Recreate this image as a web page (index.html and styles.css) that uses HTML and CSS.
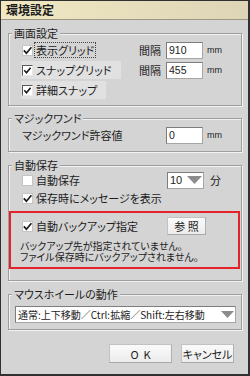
FILE: index.html
```html
<!DOCTYPE html>
<html lang="ja">
<head>
    <meta charset="UTF-8">
    <meta name="viewport" content="width=device-width, initial-scale=1.0">
    <title>環境設定</title>
    <link rel="stylesheet" href="styles.css">
</head>
<body class="cfg-body">
    <div class="cfg-win">
        <div class="cfg-title">環境設定</div>
        <div class="cfg-main">

            <!-- 画面設定 -->
            <fieldset class="cfg-grp cfg-grp-screen">
                <legend class="cfg-legend">画面設定</legend>
                <div class="cfg-row">
                    <span class="cfg-cbarea">
                        <span class="cfg-cb">
                            <span class="cfg-chk"><svg viewBox="0 0 11 11" width="11" height="11"><path d="M1.8 5.4 L4.4 8.2 L9.4 2.3" fill="none" stroke="#1a1a1a" stroke-width="1.7"/></svg></span>
                            <span class="cfg-lbl cfg-focus">表示グリッド</span>
                        </span>
                    </span>
                    <span class="cfg-key">間隔</span>
                    <span class="cfg-field">910</span>
                    <span class="cfg-unit">mm</span>
                </div>
                <div class="cfg-row">
                    <span class="cfg-cbarea">
                        <span class="cfg-cb cfg-lit">
                            <span class="cfg-chk cfg-chk-sunk"><svg viewBox="0 0 11 11" width="11" height="11"><path d="M2.3 5.3 L4.5 7.7 L8.6 2.8" fill="none" stroke="#1a1a1a" stroke-width="1.6"/></svg></span>
                            <span class="cfg-lbl">スナップグリッド</span>
                        </span>
                    </span>
                    <span class="cfg-key">間隔</span>
                    <span class="cfg-field">455</span>
                    <span class="cfg-unit">mm</span>
                </div>
                <div class="cfg-row">
                    <span class="cfg-cbarea">
                        <span class="cfg-cb cfg-lit">
                            <span class="cfg-chk cfg-chk-sunk"><svg viewBox="0 0 11 11" width="11" height="11"><path d="M2.3 5.3 L4.5 7.7 L8.6 2.8" fill="none" stroke="#1a1a1a" stroke-width="1.6"/></svg></span>
                            <span class="cfg-lbl">詳細スナップ</span>
                        </span>
                    </span>
                </div>
            </fieldset>

            <!-- マジックワンド -->
            <fieldset class="cfg-grp cfg-grp-wand">
                <legend class="cfg-legend">マジックワンド</legend>
                <div class="cfg-row">
                    <span class="cfg-wide">マジックワンド許容値</span>
                    <span class="cfg-field">0</span>
                    <span class="cfg-unit">mm</span>
                </div>
            </fieldset>

            <!-- 自動保存 -->
            <fieldset class="cfg-grp cfg-grp-save">
                <legend class="cfg-legend">自動保存</legend>
                <div class="cfg-row">
                    <span class="cfg-cbarea cfg-cbarea-wide">
                        <span class="cfg-cb">
                            <span class="cfg-chk"></span>
                            <span class="cfg-lbl">自動保存</span>
                        </span>
                    </span>
                    <span class="cfg-drop cfg-drop-small">
                        <span class="cfg-drop-text">10</span>
                        <svg class="cfg-arrow" viewBox="0 0 15 8" width="15" height="8"><polygon points="0,0 15,0 7.5,8" fill="#8c8c8c"/></svg>
                    </span>
                    <span class="cfg-min">分</span>
                </div>
                <div class="cfg-row">
                    <span class="cfg-cb">
                        <span class="cfg-chk"><svg viewBox="0 0 11 11" width="11" height="11"><path d="M1.8 5.4 L4.4 8.2 L9.4 2.3" fill="none" stroke="#1a1a1a" stroke-width="1.7"/></svg></span>
                        <span class="cfg-lbl">保存時にメッセージを表示</span>
                    </span>
                </div>

                <div class="cfg-alert">
                    <div class="cfg-row cfg-row-alert">
                        <span class="cfg-cbarea cfg-cbarea-wide">
                            <span class="cfg-cb">
                                <span class="cfg-chk"><svg viewBox="0 0 11 11" width="11" height="11"><path d="M1.8 5.4 L4.4 8.2 L9.4 2.3" fill="none" stroke="#1a1a1a" stroke-width="1.7"/></svg></span>
                                <span class="cfg-lbl">自動バックアップ指定</span>
                            </span>
                        </span>
                        <span class="cfg-btn cfg-btn-ref">参 照</span>
                    </div>
                    <div class="cfg-note">
                        <div>バックアップ先が指定されていません。</div>
                        <div>ファイル保存時にバックアップされません。</div>
                    </div>
                </div>
            </fieldset>

            <!-- マウスホイールの動作 -->
            <fieldset class="cfg-grp cfg-grp-wheel">
                <legend class="cfg-legend">マウスホイールの動作</legend>
                <span class="cfg-drop cfg-drop-wide">
                    <span class="cfg-drop-text">通常:上下移動／Ctrl:拡縮／Shift:左右移動</span>
                    <svg class="cfg-arrow" viewBox="0 0 15 8" width="13" height="7"><polygon points="0,0 15,0 7.5,8" fill="#8c8c8c"/></svg>
                </span>
            </fieldset>

            <div class="cfg-actions">
                <span class="cfg-btn cfg-btn-ok">O&nbsp;&nbsp;K</span>
                <span class="cfg-btn cfg-btn-cancel">キャンセル</span>
            </div>
        </div>
    </div>
</body>
</html>
```

FILE: styles.css
```css
/* ベース */
.cfg-body {
    margin: 0;
    overflow: hidden;
}

.cfg-win {
    width: 250px;
    height: 376px;
    box-sizing: border-box;
    border: 1px solid #303030;
    border-right-width: 2px;
    border-bottom-width: 2px;
    background: #d4d4d4;
    font-family: "Noto Sans CJK JP", sans-serif;
    font-size: 11px;
    font-feature-settings: "palt";
    color: #1c1c1c;
}

/* タイトルバー */
.cfg-title {
    height: 18px;
    line-height: 18px;
    padding-left: 5px;
    font-size: 12px;
    font-weight: bold;
    background: linear-gradient(to right, #f1e8c3, #ddd5b6);
    border-bottom: 1px solid #9c9682;
}

.cfg-main {
    padding: 7px 6px 0 7px;
}

/* グループ枠 */
.cfg-grp {
    margin: 0;
    padding: 2px 0 6px 13px;
    min-width: 0;
    border: 1px solid #9e9e9e;
    box-shadow: inset 1px 1px 0 #f2f2f2, 1px 1px 0 #f2f2f2;
}

.cfg-legend {
    padding: 0 2px;
    margin-left: -10px;
    line-height: 12px;
    background: #d4d4d4;
}

.cfg-grp-screen {
    display: flex;
    flex-direction: column;
    gap: 2px;
}

.cfg-grp-wand {
    margin-top: 6px;
    padding-bottom: 7px;
}

.cfg-grp-save {
    margin-top: 7px;
    padding-top: 0;
    padding-bottom: 11px;
}

.cfg-grp-wheel {
    margin-top: 7px;
    padding: 6px 4px 6px 6px;
}

.cfg-grp-wheel .cfg-legend {
    margin-left: -3px;
}

/* 行 */
.cfg-row {
    display: flex;
    align-items: center;
    height: 18px;
}

.cfg-cbarea {
    width: 117px;
    flex: none;
}

.cfg-cbarea-wide {
    width: 145px;
}

.cfg-cb {
    display: inline-flex;
    align-items: center;
    height: 18px;
}

.cfg-lit {
    margin-left: -1px;
    padding: 0 9px 0 1px;
    background: #e1e1e1;
}

.cfg-chk {
    width: 11px;
    height: 11px;
    box-sizing: border-box;
    background: #ffffff;
    border: 1px solid #c4c4c4;
    display: inline-flex;
    align-items: center;
    justify-content: center;
    flex: none;
}

.cfg-chk svg {
    display: block;
    flex: none;
}

.cfg-chk-sunk {
    border-color: #5a5a5a #e8e8e8 #e8e8e8 #5a5a5a;
}

.cfg-lbl {
    margin-left: 3px;
    line-height: 14px;
    white-space: nowrap;
}

.cfg-focus {
    outline: 1px dotted #444;
    outline-offset: 0;
    padding: 0 1px;
    margin-left: 2px;
}

.cfg-key {
    width: 27px;
    flex: none;
}

.cfg-wide {
    width: 144px;
    flex: none;
}

/* 入力欄 */
.cfg-field {
    width: 37px;
    height: 17px;
    box-sizing: border-box;
    background: #ffffff;
    border: 1px solid #a6a6a6;
    border-top-color: #7d7d7d;
    border-left-color: #7d7d7d;
    padding-left: 2px;
    font-family: "Liberation Sans", Arial, sans-serif;
    font-size: 10.5px;
    line-height: 15px;
    flex: none;
}

.cfg-unit {
    margin-left: 4px;
    font-family: "Liberation Sans", Arial, sans-serif;
    font-size: 9px;
}

.cfg-drop {
    display: flex;
    align-items: center;
    height: 17px;
    box-sizing: border-box;
    background: #ffffff;
    border: 1px solid #a6a6a6;
    border-top-color: #7d7d7d;
    border-left-color: #7d7d7d;
    padding-left: 2px;
    flex: none;
}

.cfg-drop-small {
    width: 37px;
    font-family: "Liberation Sans", Arial, sans-serif;
    font-size: 11px;
}

.cfg-drop-wide {
    width: 221px;
    height: 17px;
    font-size: 10px;
}

.cfg-drop-text {
    flex: 1;
    white-space: nowrap;
    line-height: 15px;
}

.cfg-arrow {
    margin-right: 1px;
    flex: none;
}

.cfg-min {
    margin-left: 6px;
}

/* 赤枠 */
.cfg-alert {
    margin: 4px 1px 0 -13px;
    border: 2px solid #e32229;
    padding: 4px 0 5px 9px;
}

.cfg-row-alert {
    padding-left: 2px;
}

.cfg-note {
    margin-top: 5px;
    font-size: 10px;
    line-height: 11px;
    white-space: nowrap;
}

/* ボタン */
.cfg-btn {
    display: inline-flex;
    align-items: center;
    justify-content: center;
    box-sizing: border-box;
    background: linear-gradient(#fafafa, #ececec);
    border: 1px solid #c2c2c2;
    border-right-color: #b0b0b0;
    border-bottom-color: #a8a8a8;
}

.cfg-btn-ref {
    width: 39px;
    height: 18px;
    flex: none;
}

.cfg-actions {
    display: flex;
    justify-content: flex-end;
    gap: 9px;
    margin-top: 14px;
    padding-right: 8px;
}

.cfg-btn-ok {
    width: 63px;
    height: 19px;
}

.cfg-btn-cancel {
    width: 53px;
    height: 19px;
}
```
